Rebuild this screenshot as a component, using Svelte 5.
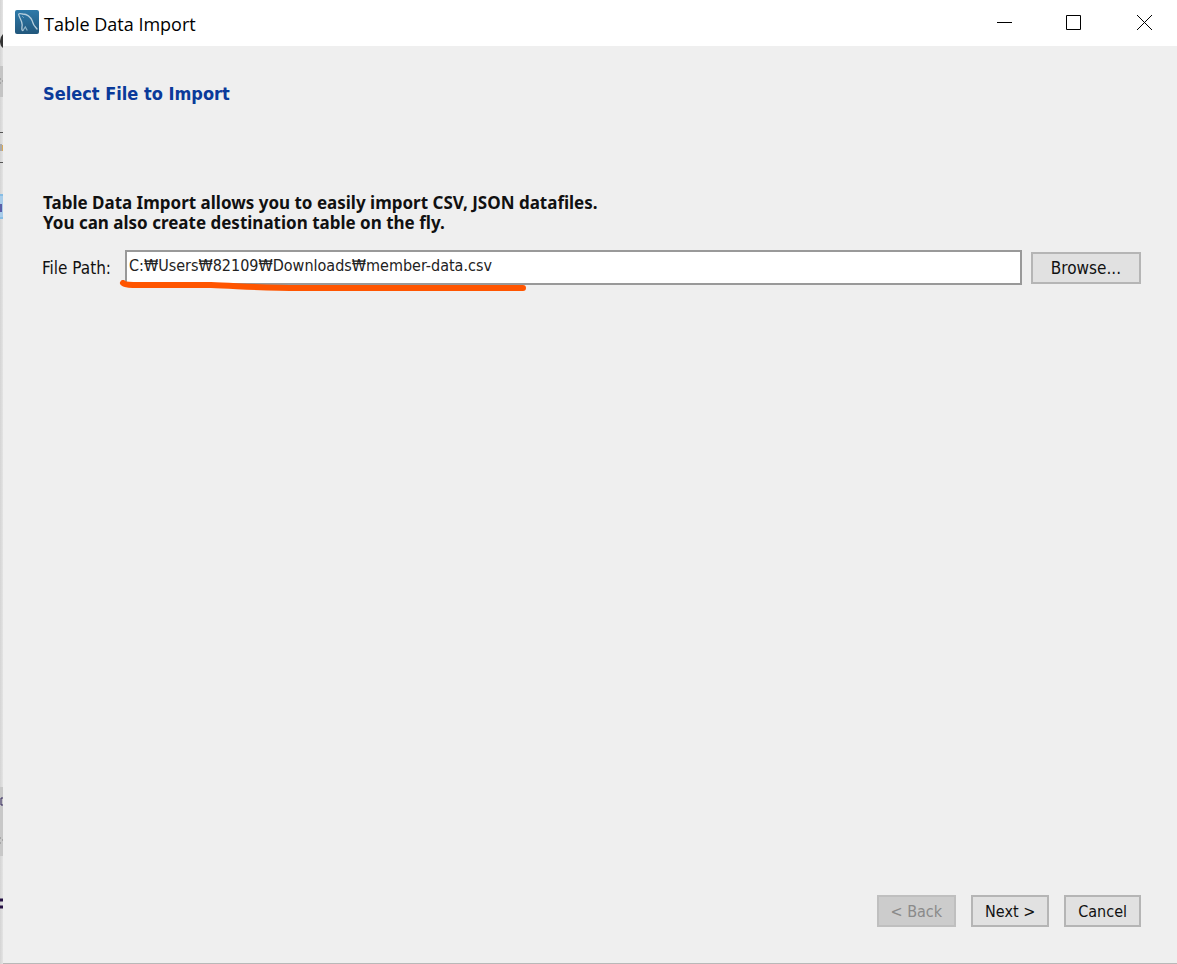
<script>
  let filePath = $state('C:₩Users₩82109₩Downloads₩member-data.csv');

  const intro = [
    'Table Data Import allows you to easily import CSV, JSON datafiles.',
    'You can also create destination table on the fly.'
  ];

  const steps = [
    { label: '< Back', disabled: true },
    { label: 'Next >', disabled: false },
    { label: 'Cancel', disabled: false }
  ];
</script>

<div class="desktop">
  <!-- sliver of the window behind the dialog -->
  <svg class="behind" width="3" height="964" viewBox="0 0 3 964" aria-hidden="true">
    <rect y="66" width="3" height="31" fill="#c4c4c4" />
    <path d="M3 34 Q0 37 0 41 Q0 46 3 48 Z" fill="#333" />
    <path d="M0 79h1M2 81h1M0 83h1" stroke="#888" />
    <path d="M0 132.500h3M0 162.500h3" stroke="#555" />
    <rect y="144" width="2" height="7" fill="#aaa" />
    <rect x="2" y="145" width="1" height="6" fill="#d8a95a" />
    <rect y="194" width="3" height="25" fill="#a9cdea" />
    <path d="M0 195h3M0 218h3" stroke="#65addf" />
    <rect y="204" width="2" height="8" fill="#5b5fa8" />
    <rect y="787" width="3" height="69" fill="#c8c8c8" />
    <path d="M3 798H1v7h2" fill="none" stroke="#33265c" />
    <path d="M0 838h1M2 840h1M0 843h1" stroke="#888" />
    <path d="M0 900h3M0 907h3" stroke="#251043" stroke-width="3" />
  </svg>

  <main class="dialog">
    <header class="titlebar">
      <svg class="logo" width="24" height="24" viewBox="0 0 24 24" aria-hidden="true">
        <defs>
          <linearGradient id="sea" x1="0" y1="0" x2="0" y2="1">
            <stop offset="0" stop-color="#2d79a9" />
            <stop offset="1" stop-color="#22577c" />
          </linearGradient>
        </defs>
        <rect width="24" height="24" rx="2" fill="url(#sea)" />
        <path
          d="M8 20.500 C6.500 21 6.800 17.500 7.200 15 C7.300 12.500 6 10 5 8 C4.300 6 2.800 4.500 4 3.800 C5 3.200 6.500 3.800 7.800 4 C12 4.200 15.500 7 17.300 11 C18.200 13.500 18.500 15.300 20 16.500 L22 19"
          fill="none" stroke="#b4cddc" stroke-width="1.300" stroke-linecap="round" stroke-linejoin="round"
        />
        <path d="M8 20.500 L10.300 17 L12.300 20.500" fill="none" stroke="#8fb3c8" stroke-width="1.200" />
        <path d="M7.500 6.500 L8.500 7.500" stroke="#a9c6d8" />
      </svg>
      <h1>Table Data Import</h1>
      <div class="window-controls">
        <button aria-label="Minimize">
          <svg width="17" height="17" viewBox="0 0 17 17"><path d="M1 8.500h15" /></svg>
        </button>
        <button aria-label="Maximize">
          <svg width="17" height="17" viewBox="0 0 17 17"><path d="M1.500 1.500h14v14h-14z" /></svg>
        </button>
        <button aria-label="Close">
          <svg width="17" height="17" viewBox="0 0 17 17"><path d="M1 1l15 15M16 1L1 16" /></svg>
        </button>
      </div>
    </header>

    <section class="content">
      <h2>Select File to Import</h2>

      <p class="intro">
        {#each intro as line}
          <span>{line}</span>
        {/each}
      </p>

      <div class="file-row">
        <label for="file-path">File Path:</label>
        <div class="field">
          <input id="file-path" type="text" spellcheck="false" bind:value={filePath} />
          <svg class="marker" width="410" height="12" viewBox="0 0 410 12" aria-hidden="true">
            <path d="M4 3 C6 5 12 5 20 5 H92 C120 6 145 8 180 8 H404" />
          </svg>
        </div>
        <button class="push browse">Browse...</button>
      </div>
    </section>

    <footer>
      {#each steps as step}
        <button class="push" disabled={step.disabled}>{step.label}</button>
      {/each}
    </footer>
  </main>
</div>

<style>
  :global(body) {
    background: #efefef;
  }

  .desktop {
    display: flex;
    min-height: 100vh;
    box-sizing: border-box;
    position: relative;
    padding-left: 3px;
    background: linear-gradient(to right, #d4d4d4, #e4e4e4 3px);
    font-family: Tahoma, 'DejaVu Sans Condensed', 'Noto Sans', sans-serif;
    color: #111;
  }

  .behind {
    position: absolute;
    left: 0;
    top: 0;
  }

  .dialog {
    flex: 1;
    display: flex;
    flex-direction: column;
    background: #efefef;
    border-bottom: 1px solid #b8b8b8;
  }

  .titlebar {
    display: flex;
    align-items: center;
    height: 46px;
    padding-left: 12px;
    background: #fff;
  }

  .logo {
    margin-bottom: 2px;
  }

  h1 {
    margin: 1px 0 0 5px;
    font: 400 18px/24px 'Open Sans', 'Noto Sans', sans-serif;
    color: #000;
  }

  .window-controls {
    display: flex;
    margin-left: auto;
  }

  .window-controls button {
    display: flex;
    align-items: center;
    justify-content: center;
    width: 69px;
    height: 46px;
    padding: 0 0 1px;
    border: 0;
    background: none;
  }

  .window-controls button:last-child {
    width: 66px;
    margin-left: 3px;
  }

  .window-controls path {
    fill: none;
    stroke: #000;
  }

  .content {
    flex: 1;
    padding: 36px 36px 0 39px;
  }

  h2 {
    margin: 0;
    padding-left: 1px;
    font-size: 18px;
    line-height: 24px;
    color: #0a3a9a;
  }

  .intro {
    margin: 87px 0 0;
    padding-left: 1px;
    font-family: Tahoma, 'Noto Sans', sans-serif;
    font-size: 17px;
    font-weight: 700;
    line-height: 20px;
  }

  .intro span {
    display: block;
  }

  .file-row {
    display: flex;
    align-items: center;
    gap: 9px;
    margin-top: 17px;
  }

  label {
    padding-right: 5px;
    font-size: 17px;
    line-height: 20px;
    white-space: nowrap;
  }

  .field {
    flex: 1;
    position: relative;
    display: flex;
  }

  input {
    width: 100%;
    height: 35px;
    box-sizing: border-box;
    padding: 0 2px 4px;
    border: 2px solid #999;
    background: #fff;
    color: #222;
    font-family: inherit;
    font-size: 16px;
    outline: 0;
  }

  .marker {
    position: absolute;
    left: -6px;
    top: 30px;
    pointer-events: none;
  }

  .marker path {
    fill: none;
    stroke: #ff5500;
    stroke-width: 6px;
    stroke-linecap: round;
  }

  .push {
    height: 32px;
    padding: 1px 12px 0;
    border: 2px solid #b5b5b5;
    background: #e1e1e1;
    color: #111;
    font-family: inherit;
    font-size: 16px;
    line-height: 20px;
  }

  .push:disabled {
    border-color: #bfbfbf;
    background: #ccc;
    color: #8a8a8a;
  }

  .browse {
    padding: 1px 18px 0;
    font-size: 17px;
  }

  footer {
    display: flex;
    justify-content: flex-end;
    gap: 15px;
    padding: 0 36px 36px;
  }
</style>
